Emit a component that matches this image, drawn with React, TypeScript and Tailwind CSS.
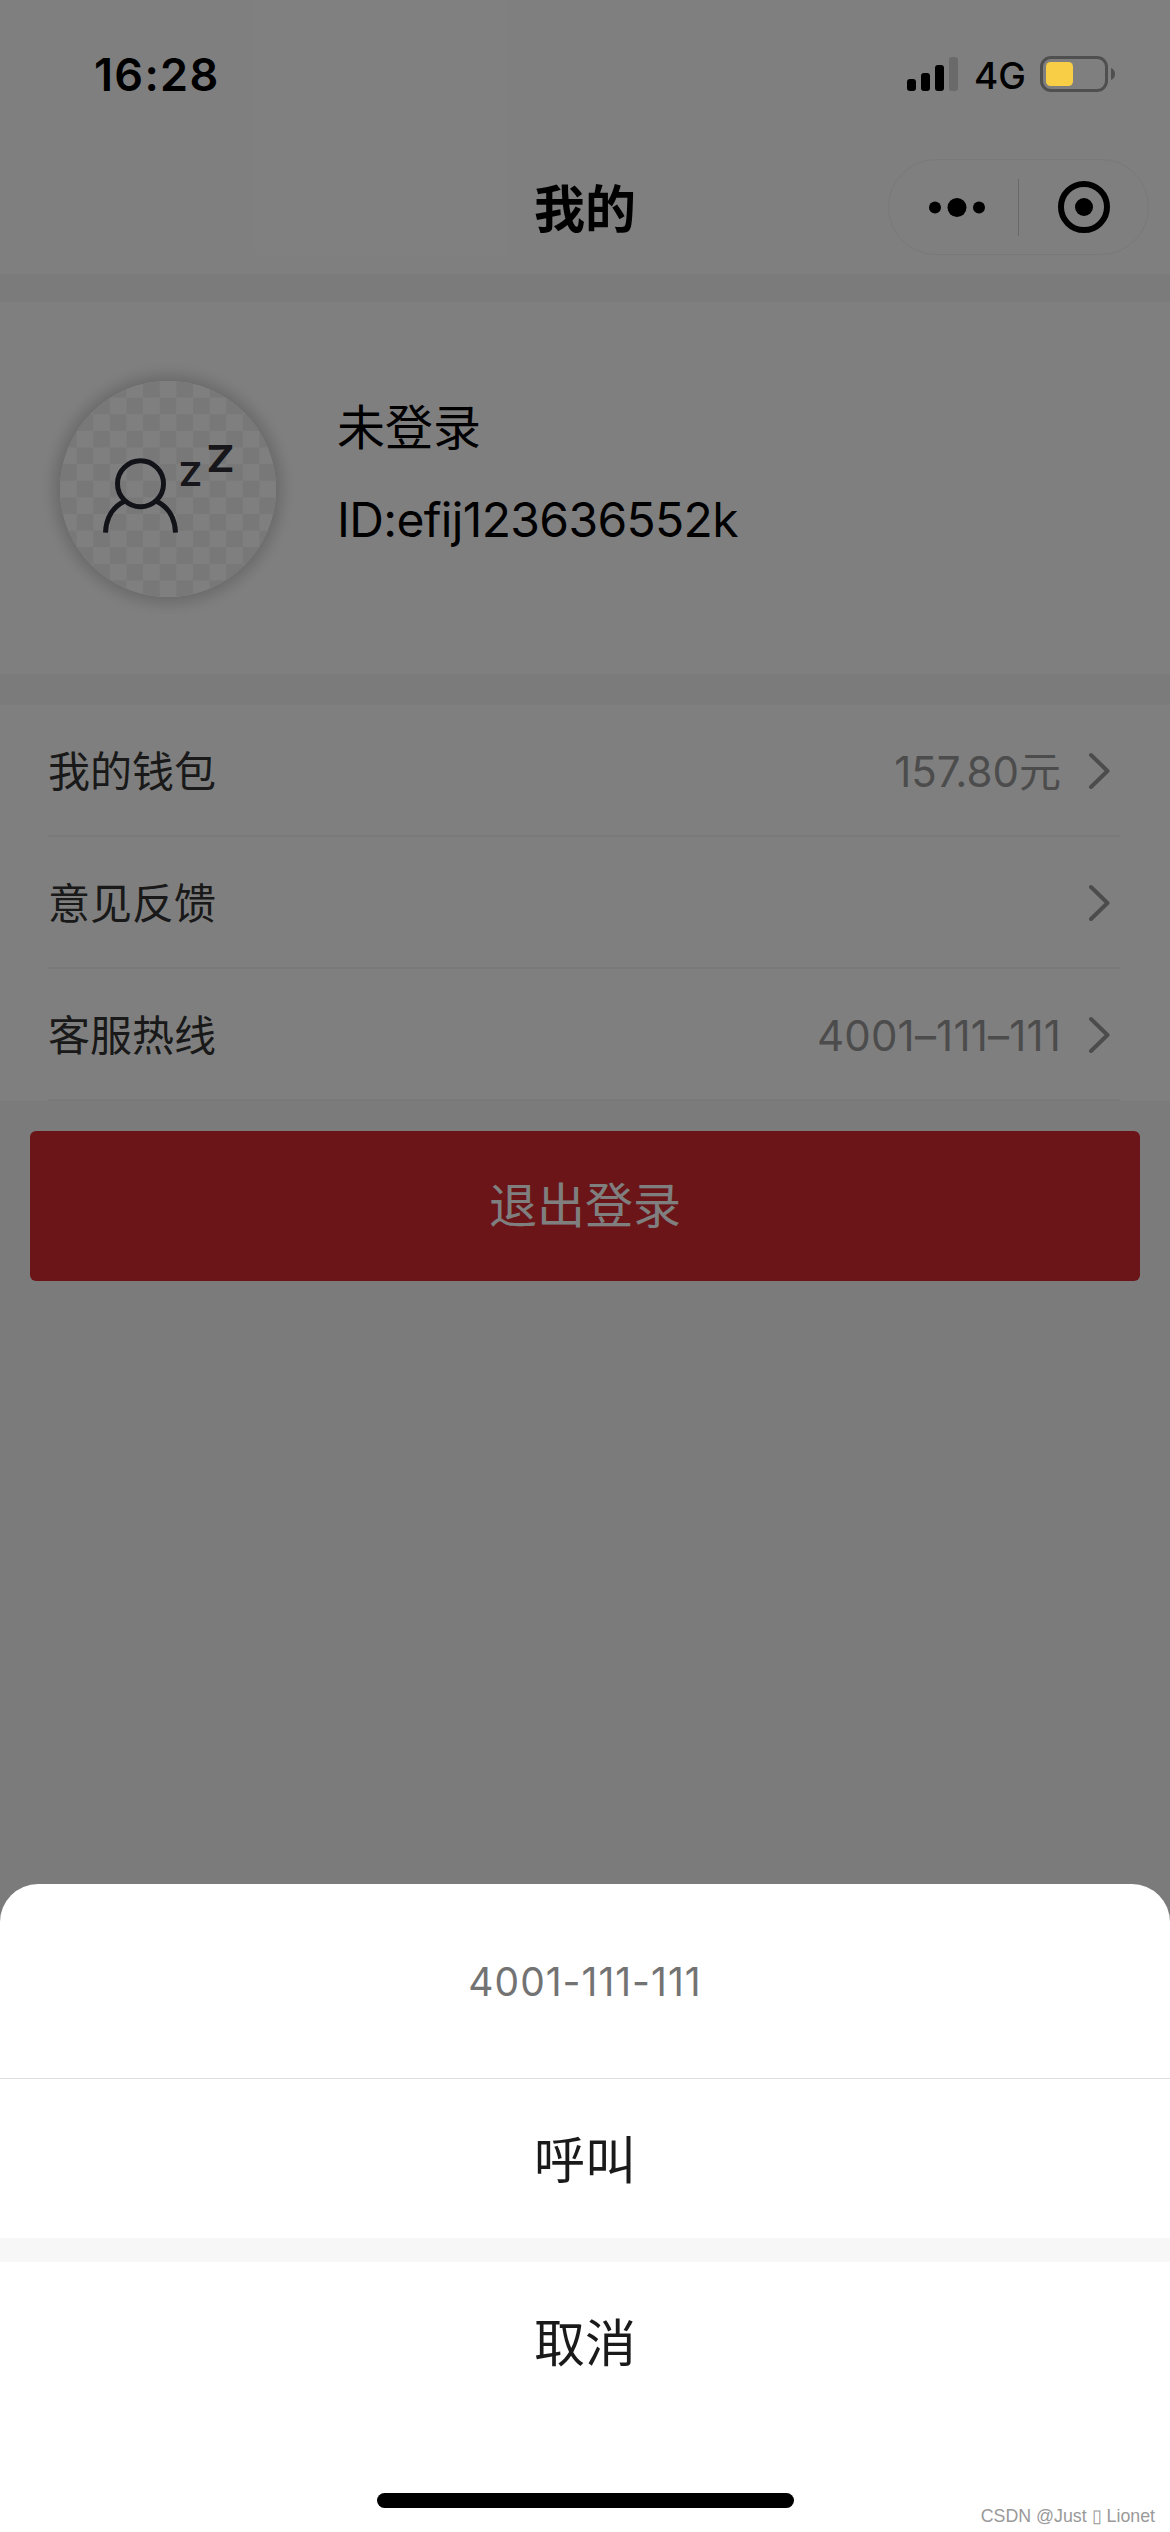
import React from 'react';

interface MenuRow {
  id: string;
  label: string;
  value?: string;
  valueClass?: string;
}

const ROWS: MenuRow[] = [
  { id: 'wallet', label: '我的钱包', value: '157.80元' },
  { id: 'feedback', label: '意见反馈' },
  { id: 'hotline', label: '客服热线', value: '4001–111–111', valueClass: 'tracking-[0.2px]' }
];

const CHECKER_CELLS = Array.from({ length: 13 * 13 }, (_, i) => i);

const SignalIcon = () => (
  <svg width="51" height="34" viewBox="0 0 51 34">
    <rect x="0" y="22" width="9" height="12" rx="3" />
    <rect x="14" y="16" width="9" height="18" rx="3" />
    <rect x="28" y="8" width="9" height="26" rx="3" />
    <rect x="42" y="0" width="9" height="34" rx="3" fill="#6a6a6a" />
  </svg>
);

const BatteryIcon = () => (
  <svg width="76" height="36" viewBox="0 0 76 36">
    <rect x="1.5" y="1.5" width="65" height="33" rx="9.5" fill="none" stroke="#4f4f4f" strokeWidth="3" />
    <rect x="6" y="6" width="27" height="24" rx="4.5" fill="#f7ce46" />
    <path d="M71 12c2.6 1.2 4 3.3 4 6s-1.4 4.8-4 6z" fill="#4f4f4f" />
  </svg>
);

const StatusBar = () => (
  <div className="relative z-20 flex h-[132px] items-start justify-between pl-[94px] pr-[54px] text-black">
    <div className="pt-[47px] text-[45px] leading-[56px] font-semibold tracking-[1.3px]">16:28</div>
    <div className="flex pt-[56px]">
      <div className="pt-px">
        <SignalIcon />
      </div>
      <div className="ml-4 w-[51px] text-[37px] leading-[40px] font-medium whitespace-nowrap">4G</div>
      <div className="ml-[15px]">
        <BatteryIcon />
      </div>
    </div>
  </div>
);

const NavBar = () => (
  <div className="relative z-20 grid h-[142px] grid-cols-[1fr_102px_1fr] items-start">
    <div />
    <div className="pt-[41px] text-[51px] leading-[74px] font-semibold text-black">我的</div>
    <div className="flex justify-end pt-[27px] pr-[21px]">
      <div className="flex h-24 w-[261px] items-center rounded-full border border-[#797979]">
        <svg width="129" height="94" viewBox="0 0 129 94">
          <circle cx="46" cy="47.5" r="6" />
          <circle cx="68" cy="47.5" r="9.5" />
          <circle cx="90" cy="47.5" r="6" />
        </svg>
        <div className="h-[57px] w-px bg-[#686868]" />
        <svg width="129" height="94" viewBox="0 0 129 94">
          <circle cx="65" cy="47" r="23" fill="none" stroke="#000" strokeWidth="6" />
          <circle cx="65" cy="47" r="9" />
        </svg>
      </div>
    </div>
  </div>
);

const Avatar = () => (
  <div className="h-[216px] w-[216px] overflow-hidden rounded-full shadow-[0_0_15px_6px_rgba(0,0,0,0.18)]">
    <svg width="216" height="216" viewBox="0 0 216 216">
      <rect width="216" height="216" fill="#fff" />
      {CHECKER_CELLS.filter((i) => i % 2 === 1).map((i) => (
        <rect
          key={i}
          x={(i % 13) * 16.62}
          y={Math.floor(i / 13) * 16.62}
          width="16.62"
          height="16.62"
          fill="#f1f1f1"
        />
      ))}
      <g fill="none" stroke="#252533" strokeWidth="5">
        <circle cx="80.5" cy="102.7" r="23" />
        <path d="M45.5 151.700C46 137 53 125.500 65 120M96 120C108 125.500 115 137 115.500 151.700" />
      </g>
      <g fill="#2f2f36" fontFamily="Inter, sans-serif" fontWeight="700">
        <text x="119" y="105" fontSize="32" textLength="23" lengthAdjust="spacingAndGlyphs">Z</text>
        <text x="146.5" y="91" fontSize="37.5" textLength="28" lengthAdjust="spacingAndGlyphs">Z</text>
      </g>
    </svg>
  </div>
);

const Chevron = () => (
  <svg width="22" height="38" viewBox="0 0 22 38" fill="none" stroke="#999" strokeWidth="4" strokeLinecap="round" strokeLinejoin="round">
    <path d="M3 3l16.5 16L3 35" />
  </svg>
);

const ActionSheet = () => (
  <div className="absolute inset-x-0 bottom-0 z-30 flex h-[648px] flex-col rounded-t-[38px] bg-white text-center text-[#1a1a1a]">
    <div className="h-[195px] border-b border-[#dedede] pt-[73px] text-[39px] leading-[50px] tracking-[1px] text-[#737373]">
      4001-111-111
    </div>
    <button className="h-[159px] pt-[5px] text-[51px] leading-[74px]">呼叫</button>
    <div className="h-6 bg-[#f7f7f7]" />
    <button className="h-[159px] pt-[4px] text-[51px] leading-[74px]">取消</button>
    <div className="mx-auto mt-[72px] h-[15px] w-[417px] rounded-full bg-black" />
  </div>
);

const App: React.FC = () => {
  return (
    <div className="relative h-[2532px] w-[1170px] overflow-hidden bg-[#f6f6f6] font-['Inter','Noto_Sans_CJK_SC',sans-serif]">
      {/* Dimming mask */}
      <div className="absolute inset-0 z-10 bg-black/50" />

      <header className="bg-white">
        <StatusBar />
        <NavBar />
      </header>

      <section className="mt-[28px] flex h-[372px] bg-white pt-[79px] pl-[60px]">
        <Avatar />
        <div className="ml-[61px] pt-[11px] text-[48px] text-black">
          <div className="leading-[72px]">未登录</div>
          <div className="mt-[25px] leading-[62px] tracking-[-0.65px]">ID:efij123636552k</div>
        </div>
      </section>

      <section className="mt-[31px] bg-white">
        {ROWS.map((row) => (
          <div key={row.id} className="mr-[50px] ml-[48px] flex h-[132px] items-center border-b-2 border-[#f3f3f3] pt-[2px] pr-[10px]">
            <div className="text-[42px] text-[#333]">{row.label}</div>
            <div className={`ml-auto text-[42px] text-[#999] ${row.valueClass ?? ''}`}>{row.value}</div>
            <div className="ml-[27px]">
              <Chevron />
            </div>
          </div>
        ))}
      </section>

      <button className="mx-[30px] mt-[30px] block h-[150px] w-[1110px] rounded-md bg-[#d62a30] text-[48px] text-white">
        退出登录
      </button>

      <ActionSheet />

      <div className="absolute right-[15px] bottom-[5px] z-40 text-[17.8px] leading-[22px] text-[#999] font-['Liberation_Sans',sans-serif]">
        CSDN @Just ▯ Lionet
      </div>
    </div>
  );
};

export default App;
